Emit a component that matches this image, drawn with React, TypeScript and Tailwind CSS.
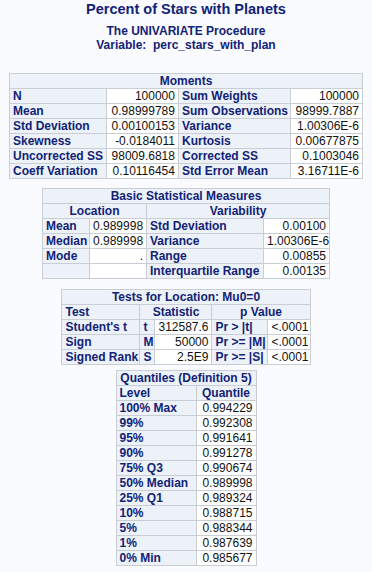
import React from "react"

// SAS univariate report: title block followed by a stack of centred output tables
const font = { fontFamily: '"Liberation Sans", Arial, sans-serif' }

type CellProps = {
  children?: React.ReactNode,
  head?: boolean,
  align?: "left" | "right" | "center",
  span?: number,
}

function Cell({ children, head = false, align, span }: CellProps) {
  const a = align ?? (head ? "left" : "right")
  const alignClass = a === "left" ? "text-left" : a === "center" ? "text-center" : "text-right"
  const look = head
    ? "bg-[#edf2f9] font-bold text-[#112277]"
    : "bg-white text-[#111]"
  return (
    <td colSpan={span} className={`${look} ${alignClass} border border-[#c9cdd6] px-[3px] py-0 leading-[14px] whitespace-nowrap overflow-hidden`}>
      {children}
    </td>
  )
}

type TableProps = {
  widths: number[],
  className?: string,
  children: React.ReactNode,
}

function SasTable({ widths, className = "", children }: TableProps) {
  const total = widths.reduce((s, w) => s + w, 0)
  return (
    <table
      className={`mx-auto table-fixed border-collapse border border-[#c1c1c1] text-[12px] ${className}`}
      style={{ width: total }}
    >
      <colgroup>
        {widths.map((w, i) => <col key={i} style={{ width: w }} />)}
      </colgroup>
      <tbody>{children}</tbody>
    </table>
  )
}

function Row({ children }: { children: React.ReactNode }) {
  return <tr className="h-[15px]">{children}</tr>
}

const moments: [string, string, string, string][] = [
  ["N", "100000", "Sum Weights", "100000"],
  ["Mean", "0.98999789", "Sum Observations", "98999.7887"],
  ["Std Deviation", "0.00100153", "Variance", "1.00306E-6"],
  ["Skewness", "-0.0184011", "Kurtosis", "0.00677875"],
  ["Uncorrected SS", "98009.6818", "Corrected SS", "0.1003046"],
  ["Coeff Variation", "0.10116454", "Std Error Mean", "3.16711E-6"],
]

const basic: [string, string, string, string][] = [
  ["Mean", "0.989998", "Std Deviation", "0.00100"],
  ["Median", "0.989998", "Variance", "1.00306E-6"],
  ["Mode", ".", "Range", "0.00855"],
  ["", "", "Interquartile Range", "0.00135"],
]

const tests: [string, string, string, string, string][] = [
  ["Student's t", "t", "312587.6", "Pr > |t|", "<.0001"],
  ["Sign", "M", "50000", "Pr >= |M|", "<.0001"],
  ["Signed Rank", "S", "2.5E9", "Pr >= |S|", "<.0001"],
]

const quantiles: [string, string][] = [
  ["100% Max", "0.994229"],
  ["99%", "0.992308"],
  ["95%", "0.991641"],
  ["90%", "0.991278"],
  ["75% Q3", "0.990674"],
  ["50% Median", "0.989998"],
  ["25% Q1", "0.989324"],
  ["10%", "0.988715"],
  ["5%", "0.988344"],
  ["1%", "0.987639"],
  ["0% Min", "0.985677"],
]

export default function App() {
  return (
    <div className="w-[372px] h-[572px] overflow-hidden bg-[#fafbfe]" style={font}>
      <div className="pt-[1px] text-center font-bold text-[#112277]">
        <div className="text-[14.5px] leading-[17px]">Percent of Stars with Planets</div>
        <div className="mt-[6px] text-[12px] leading-[14px]">The UNIVARIATE Procedure</div>
        <div className="text-[12px] leading-[14px]">Variable:&nbsp; perc_stars_with_plan</div>
      </div>

      <SasTable widths={[97, 72, 112, 72]} className="mt-[21px]">
        <Row><Cell head align="center" span={4}>Moments</Cell></Row>
        {moments.map(([a, b, c, d]) => (
          <Row key={a}>
            <Cell head>{a}</Cell>
            <Cell>{b}</Cell>
            <Cell head>{c}</Cell>
            <Cell>{d}</Cell>
          </Row>
        ))}
      </SasTable>

      <SasTable widths={[47, 57, 117, 66]} className="mt-[9px]">
        <Row><Cell head align="center" span={4}>Basic Statistical Measures</Cell></Row>
        <Row>
          <Cell head align="center" span={2}>Location</Cell>
          <Cell head align="center" span={2}>Variability</Cell>
        </Row>
        {basic.map(([a, b, c, d]) => (
          <Row key={c}>
            <Cell head>{a}</Cell>
            <Cell>{b}</Cell>
            <Cell head>{c}</Cell>
            <Cell>{d}</Cell>
          </Row>
        ))}
      </SasTable>

      <SasTable widths={[78, 15, 57, 56, 42]} className="mt-[10px]">
        <Row><Cell head align="center" span={5}>Tests for Location: Mu0=0</Cell></Row>
        <Row>
          <Cell head>Test</Cell>
          <Cell head align="center" span={2}>Statistic</Cell>
          <Cell head align="center" span={2}>p Value</Cell>
        </Row>
        {tests.map(([a, b, c, d, e]) => (
          <Row key={a}>
            <Cell head>{a}</Cell>
            <Cell head>{b}</Cell>
            <Cell>{c}</Cell>
            <Cell head>{d}</Cell>
            <Cell align="left">{e}</Cell>
          </Row>
        ))}
      </SasTable>

      <SasTable widths={[80, 60]} className="mt-[5px]">
        <Row><Cell head align="center" span={2}>Quantiles (Definition 5)</Cell></Row>
        <Row>
          <Cell head>Level</Cell>
          <Cell head align="center">Quantile</Cell>
        </Row>
        {quantiles.map(([a, b]) => (
          <Row key={a}>
            <Cell head>{a}</Cell>
            <Cell>{b}</Cell>
          </Row>
        ))}
      </SasTable>

      {/* top edge of the next output table, cut by the window */}
      <div className="mx-auto mt-[7px] h-[4px] w-[272px] border-t border-x border-[#c1c1c1] bg-[#edf2f9]" />
    </div>
  )
}
